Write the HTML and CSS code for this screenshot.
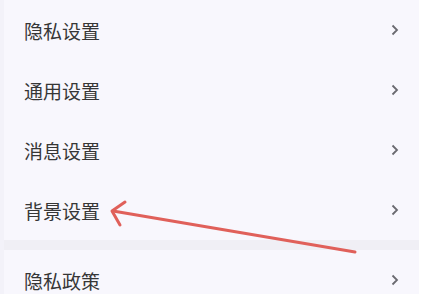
FILE: index.html
```html
<!DOCTYPE html>
<html lang="zh">
<head>
<meta charset="utf-8">
<link rel="stylesheet" href="styles.css">
</head>
<body>
<div class="screen">
  <div class="panel">
    <div class="group">
      <div class="row"><span class="label">隐私设置</span><svg class="chev" viewBox="0 0 8 12"><path d="M1.5 1.5 L6 6 L1.5 10.5"/></svg></div>
      <div class="row"><span class="label">通用设置</span><svg class="chev" viewBox="0 0 8 12"><path d="M1.5 1.5 L6 6 L1.5 10.5"/></svg></div>
      <div class="row"><span class="label">消息设置</span><svg class="chev" viewBox="0 0 8 12"><path d="M1.5 1.5 L6 6 L1.5 10.5"/></svg></div>
      <div class="row"><span class="label">背景设置</span><svg class="chev" viewBox="0 0 8 12"><path d="M1.5 1.5 L6 6 L1.5 10.5"/></svg></div>
    </div>
    <div class="sep"></div>
    <div class="group">
      <div class="row"><span class="label">隐私政策</span><svg class="chev" viewBox="0 0 8 12"><path d="M1.5 1.5 L6 6 L1.5 10.5"/></svg></div>
    </div>
  </div>
  <div class="side"></div>
  <svg class="arrow" viewBox="0 0 440 294" width="440" height="294">
    <path d="M355 252 L113 211" />
    <path d="M125 202 L112 211 L120 225" />
  </svg>
</div>
</body>
</html>
```
FILE: styles.css
```css
html, body {
  margin: 0;
  padding: 0;
  background: #ffffff;
}
.screen {
  position: relative;
  width: 440px;
  height: 294px;
  overflow: hidden;
  display: flex;
  align-items: flex-start;
}
.panel {
  width: 419px;
  flex-shrink: 0;
  background: #f8f7fd;
  border-left: 4px solid #f3f2f9;
  box-sizing: border-box;
  display: flex;
  flex-direction: column;
}
.group {
  flex-shrink: 0;
}
.side {
  flex: 1;
  align-self: stretch;
  background: #ffffff;
}
.row {
  height: 60px;
  display: flex;
  align-items: center;
  justify-content: space-between;
  padding: 0 20px 0 20px;
}
.label {
  font-family: "Noto Sans CJK SC", "Noto Sans", sans-serif;
  font-size: 19px;
  color: #363636;
}
.chev {
  width: 8px;
  height: 12px;
  fill: none;
  stroke: #6a6a70;
  stroke-width: 1.8;
}
.sep {
  flex-shrink: 0;
  height: 10px;
  background: #f0eff5;
  margin-right: -21px;
}
.arrow {
  position: absolute;
  left: 0;
  top: 0;
  fill: none;
  stroke: #e0605a;
  stroke-width: 3;
  stroke-linecap: round;
  stroke-linejoin: round;
}
```
